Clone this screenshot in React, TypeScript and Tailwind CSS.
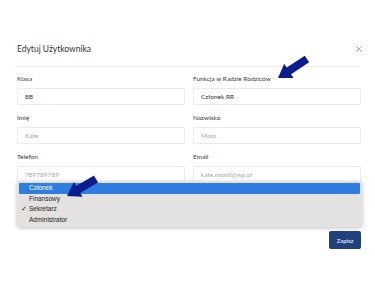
import React from "react";

function Field({ label, value, placeholder }: { label: string; value?: string; placeholder?: string }) {
  return (
    <div className="flex flex-col">
      <label className="mb-[5px] h-[8px] text-[6.5px] leading-[8px] text-[#3d3d3d]">{label}</label>
      <div className="flex h-[17px] items-center rounded-[2px] border border-[#ebebeb] px-[7px] text-[6.5px]">
        {value ? (
          <span className="text-[#333]">{value}</span>
        ) : (
          <span className="text-[#a9a9a9]">{placeholder}</span>
        )}
      </div>
    </div>
  );
}

const options = ["Członek", "Finansowy", "Sekretarz", "Administrator"];

export default function App() {
  return (
    <div className="relative h-[305px] w-[375px] overflow-hidden bg-white pt-[43px] font-['Lato',sans-serif]">
      {/* header */}
      <div className="flex items-center justify-between pl-[17px] pr-[13px]">
        <h2 className="text-[8.5px] leading-[12px] text-[#333]">Edytuj Użytkownika</h2>
        <svg width="6" height="6" viewBox="0 0 6 6" className="text-[#9a9a9a]">
          <path d="M0.5 0.5 L5.5 5.5 M5.5 0.5 L0.5 5.5" stroke="currentColor" strokeWidth="0.8" />
        </svg>
      </div>
      <div className="mx-[15px] mt-[11px] h-px bg-[#efefef]" />

      {/* form */}
      <div className="grid grid-cols-2 gap-x-[8px] gap-y-[9px] pl-[17px] pr-[14px] pt-[8px]">
        <Field label="Klasa" value="8B" />
        <Field label="Funkcja w Radzie Rodziców" value="Członek RR" />
        <Field label="Imię" placeholder="Kate" />
        <Field label="Nazwisko" placeholder="Moss" />
        <Field label="Telefon" placeholder="789789789" />
        <Field label="Email" placeholder="kate.mosill@wp.pl" />
      </div>

      {/* footer */}
      <div className="mt-[48px] flex justify-end pr-[14px]">
        <button className="h-[18px] w-[32px] rounded-[2px] bg-[#20417e] text-[6px] text-white">Zapisz</button>
      </div>

      {/* native select menu */}
      <div className="absolute left-[17px] top-[181px] w-[345px] rounded-[3px] bg-[#e4e2e0] px-[2px] py-[2px] shadow-[0_1px_4px_rgba(0,0,0,0.25)] font-['Liberation_Sans',sans-serif]">
        {options.map((o, i) => (
          <div
            key={o}
            className={
              i === 0
                ? "relative flex h-[10.5px] items-center rounded-[1px] bg-[#2f7de1] pl-[10px] text-[6.5px] text-white"
                : "relative flex h-[10.5px] items-center pl-[10px] text-[6.5px] text-[#222]"
            }
          >
            {o === "Sekretarz" && <span className="absolute left-[2px] text-[7px]">✓</span>}
            {o}
          </div>
        ))}
      </div>

      {/* annotation arrows */}
      <svg className="pointer-events-none absolute left-0 top-0" width="375" height="305" viewBox="0 0 375 305">
        <polygon
          fill="#0c1c8f"
          points="278,78 293.5,78 291.1,74.2 309.2,62.3 304.8,55.7 286.7,67.5 284.2,63.8"
        />
        <polygon
          fill="#0c1c8f"
          points="67,196 82.5,196.8 80.2,192.9 98,182.5 94,175.6 76.2,186 73.9,182.1"
        />
      </svg>
    </div>
  );
}
